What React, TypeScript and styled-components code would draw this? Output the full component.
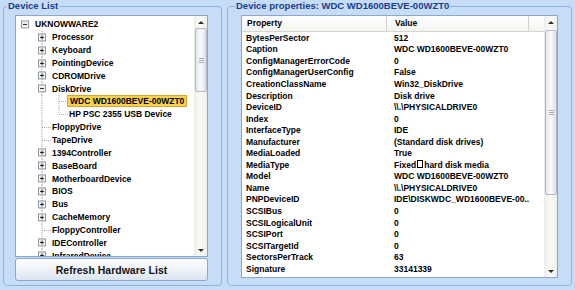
import React, { FC } from 'react';
import styled, { createGlobalStyle } from 'styled-components';

interface INode {
  label: string;
  level: number;
  exp?: '+' | '-';
  selected?: boolean;
  last?: boolean;
}

const tree: INode[] = [
  { label: 'UKNOWWARE2', level: 0, exp: '-' },
  { label: 'Processor', level: 1, exp: '+' },
  { label: 'Keyboard', level: 1, exp: '+' },
  { label: 'PointingDevice', level: 1, exp: '+' },
  { label: 'CDROMDrive', level: 1, exp: '+' },
  { label: 'DiskDrive', level: 1, exp: '-' },
  { label: 'WDC WD1600BEVE-00WZT0', level: 2, selected: true },
  { label: 'HP PSC 2355 USB Device', level: 2, last: true },
  { label: 'FloppyDrive', level: 1 },
  { label: 'TapeDrive', level: 1 },
  { label: '1394Controller', level: 1, exp: '+' },
  { label: 'BaseBoard', level: 1, exp: '+' },
  { label: 'MotherboardDevice', level: 1, exp: '+' },
  { label: 'BIOS', level: 1, exp: '+' },
  { label: 'Bus', level: 1, exp: '+' },
  { label: 'CacheMemory', level: 1, exp: '+' },
  { label: 'FloppyController', level: 1 },
  { label: 'IDEController', level: 1, exp: '+' },
  { label: 'InfraredDevice', level: 1, exp: '+' },
];

// the tab in MediaType shows up as an unprintable box
const props: [string, string][] = [
  ['BytesPerSector', '512'],
  ['Caption', 'WDC WD1600BEVE-00WZT0'],
  ['ConfigManagerErrorCode', '0'],
  ['ConfigManagerUserConfig', 'False'],
  ['CreationClassName', 'Win32_DiskDrive'],
  ['Description', 'Disk drive'],
  ['DeviceID', '\\\\.\\PHYSICALDRIVE0'],
  ['Index', '0'],
  ['InterfaceType', 'IDE'],
  ['Manufacturer', '(Standard disk drives)'],
  ['MediaLoaded', 'True'],
  ['MediaType', 'Fixed\thard disk media'],
  ['Model', 'WDC WD1600BEVE-00WZT0'],
  ['Name', '\\\\.\\PHYSICALDRIVE0'],
  ['PNPDeviceID', 'IDE\\DISKWDC_WD1600BEVE-00...'],
  ['SCSIBus', '0'],
  ['SCSILogicalUnit', '0'],
  ['SCSIPort', '0'],
  ['SCSITargetId', '0'],
  ['SectorsPerTrack', '63'],
  ['Signature', '33141339'],
];

const STEP = 17;
const LINE = '#a4a4a4';

const Connector: FC<{ node: INode }> = ({ node }) => {
  const w = (node.level + 1) * STEP;
  const cx = node.level * STEP + 8;
  const mid = 6.5;
  return (
    <svg width={w} height="100%" viewBox={`0 0 ${w} 13`} preserveAspectRatio="none">
      {node.level >= 1 && (
        <line x1={25} y1={0} x2={25} y2={13} stroke={LINE} strokeDasharray="1 1" />
      )}
      {node.level === 2 && (
        <>
          <line x1={cx} y1={0} x2={cx} y2={node.last ? mid : 13} stroke={LINE} strokeDasharray="1 1" />
          <line x1={cx} y1={mid} x2={cx + 9} y2={mid} stroke={LINE} strokeDasharray="1 1" />
        </>
      )}
      {node.level === 1 && !node.exp && (
        <line x1={cx} y1={mid} x2={cx + 9} y2={mid} stroke={LINE} strokeDasharray="1 1" />
      )}
      {node.exp && (
        <g>
          <rect x={cx - 3.5} y={mid - 3.5} width={7} height={7} fill="#f6f6f4" stroke="#8c96a4" />
          <line x1={cx - 2} y1={mid} x2={cx + 2} y2={mid} stroke="#202020" />
          {node.exp === '+' && <line x1={cx} y1={mid - 2} x2={cx} y2={mid + 2} stroke="#202020" />}
        </g>
      )}
    </svg>
  );
};

const Value: FC<{ text: string }> = ({ text }) => {
  const parts = text.split('\t');
  return (
    <>
      {parts.map((p, i) => (
        <React.Fragment key={i}>
          {i > 0 && <BadChar />}
          {p}
        </React.Fragment>
      ))}
    </>
  );
};

const Scrollbar: FC<{ top: number; size: number }> = ({ top, size }) => (
  <Bar>
    <ArrowCell><Tri $up /></ArrowCell>
    <Track>
      <Thumb $top={top} $size={size}><Grip /></Thumb>
    </Track>
    <ArrowCell><Tri /></ArrowCell>
  </Bar>
);

export default function App() {
  return (
    <>
      <Global />
      <Page>
        <Group $width={219}>
          <Legend $indent={3}>Device List</Legend>
          <LeftBody>
            <TreeBox>
              <TreeList>
                {tree.map((n, i) => (
                  <TreeRow key={i}>
                    <Connector node={n} />
                    <Label $selected={!!n.selected}>{n.label}</Label>
                  </TreeRow>
                ))}
              </TreeList>
              <Scrollbar top={0} size={64} />
            </TreeBox>
            <RefreshButton>Refresh Hardware List</RefreshButton>
          </LeftBody>
        </Group>
        <Group $width={345}>
          <Legend $indent={7}>Device properties: WDC WD1600BEVE-00WZT0</Legend>
          <RightBody>
            <TableBox>
              <TableContent>
                <Header>
                  <HeadCell $col="prop">Property</HeadCell>
                  <HeadCell $col="value">Value</HeadCell>
                  <HeadFill />
                </Header>
                {props.map(([k, v]) => (
                  <Row key={k}>
                    <Cell $col="prop">{k}</Cell>
                    <Cell $col="value"><Value text={v} /></Cell>
                  </Row>
                ))}
              </TableContent>
              <Scrollbar top={2} size={165} />
            </TableBox>
          </RightBody>
        </Group>
      </Page>
    </>
  );
}

//---------------------------STYLES-------------------------------------------//

const Global = createGlobalStyle`
  html, body {
    margin: 0;
    background: #c6dcf7;
  }
  body {
    font-family: "Liberation Sans", Arial, sans-serif;
  }
`

const Page = styled.div`
  width: 575px;
  height: 290px;
  box-sizing: border-box;
  padding: 0 3px 0 3px;
  display: flex;
  gap: 5px;
  background: #c6dcf7;
`

const Group = styled.fieldset<{ $width: number }>`
  width: ${p => p.$width}px;
  height: 286px;
  box-sizing: border-box;
  margin: 0;
  padding: 0;
  border: 1px solid #8fb2e0;
  border-radius: 4px;
  min-width: 0;
`

const Legend = styled.legend<{ $indent: number }>`
  margin-left: ${p => p.$indent}px;
  padding: 0 1px;
  font-size: 9.5px;
  line-height: 12px;
  font-weight: bold;
  color: #1a3c8e;
  white-space: nowrap;
`

const LeftBody = styled.div`
  padding: 3px 0 0 11px;
  display: flex;
  flex-direction: column;
  gap: 1px;
`

const RightBody = styled.div`
  padding: 3px 0 0 13px;
`

const TreeBox = styled.div`
  width: 193px;
  height: 242px;
  box-sizing: border-box;
  border: 1px solid #8aa8cc;
  background: #fff;
  display: flex;
  overflow: hidden;
`

const TreeList = styled.div`
  flex: 1;
  min-width: 0;
  padding: 2px 0 0 1px;
  overflow: hidden;
`

const TreeRow = styled.div`
  height: 12.85px;
  display: flex;
  align-items: center;
  font-size: 8.5px;
  font-weight: bold;
  color: #000;
  white-space: nowrap;
`

const Label = styled.span<{ $selected: boolean }>`
  margin-left: ${p => (p.$selected ? '-1px' : '1px')};
  padding: 0 ${p => (p.$selected ? '2px' : '0')};
  line-height: 10px;
  background: ${p => (p.$selected ? '#f9d24c' : 'transparent')};
  border: ${p => (p.$selected ? '1px solid #dca23a' : 'none')};
`

const RefreshButton = styled.button`
  width: 193px;
  height: 23px;
  margin: 0;
  padding: 0;
  border: 1px solid #8aa8cc;
  border-radius: 3px;
  background: linear-gradient(#fefefe, #eef2f8 50%, #dbe4f1);
  font-family: "Liberation Sans", Arial, sans-serif;
  font-size: 10.5px;
  font-weight: bold;
  color: #151515;
`

const TableBox = styled.div`
  width: 317px;
  height: 263px;
  box-sizing: border-box;
  border: 1px solid #8aa8cc;
  background: #fff;
  display: flex;
  overflow: hidden;
`

const TableContent = styled.div`
  flex: 1;
  min-width: 0;
  display: flex;
  flex-direction: column;
  font-size: 8.5px;
  font-weight: bold;
  color: #000;
  white-space: nowrap;
`

const Header = styled.div`
  height: 16px;
  flex: none;
  box-sizing: border-box;
  display: flex;
  background: linear-gradient(#ffffff, #f3f3f0);
  border-bottom: 1px solid #d6d6d0;
`

const colWidth = { prop: 145, value: 142 }
const colPad = { prop: 4, value: 7 }

const HeadCell = styled.div<{ $col: 'prop' | 'value' }>`
  width: ${p => colWidth[p.$col]}px;
  box-sizing: border-box;
  padding-left: ${p => colPad[p.$col] + 1}px;
  border-right: 1px solid #d0d0cc;
  line-height: 15px;
`

const HeadFill = styled.div`
  flex: 1;
`

const Row = styled.div`
  height: 11.55px;
  display: flex;
  align-items: center;
`

const Cell = styled.div<{ $col: 'prop' | 'value' }>`
  width: ${p => colWidth[p.$col]}px;
  box-sizing: border-box;
  padding-left: ${p => colPad[p.$col]}px;
  overflow: hidden;
`

const BadChar = styled.span`
  display: inline-block;
  width: 4px;
  height: 6px;
  margin: 0 1px;
  border: 1px solid #000;
  vertical-align: -0.5px;
`

const Bar = styled.div`
  width: 12px;
  flex: none;
  display: flex;
  flex-direction: column;
  background: linear-gradient(90deg, #f0f0ec, #fafaf8 50%, #eeeeea);
  border-left: 1px solid #ececea;
`

const ArrowCell = styled.div`
  height: 12px;
  flex: none;
  display: flex;
  align-items: center;
  justify-content: center;
`

const Tri = styled.div<{ $up?: boolean }>`
  width: 0;
  height: 0;
  border-left: 3px solid transparent;
  border-right: 3px solid transparent;
  ${p => (p.$up ? 'border-bottom: 3px solid #303030;' : 'border-top: 3px solid #303030;')}
`

const Track = styled.div`
  flex: 1;
  display: flex;
  flex-direction: column;
`

const Thumb = styled.div<{ $top: number; $size: number }>`
  margin: ${p => p.$top}px 0 0 0;
  height: ${p => p.$size}px;
  box-sizing: border-box;
  border: 1px solid #b2b8c2;
  border-radius: 2px;
  background: linear-gradient(90deg, #e4e7ec, #fbfbfc 50%, #dcdfe5);
  display: flex;
  align-items: center;
  justify-content: center;
`

const Grip = styled.div`
  width: 5px;
  height: 5px;
  background: repeating-linear-gradient(#a6acb6 0 1px, transparent 1px 2px);
`
